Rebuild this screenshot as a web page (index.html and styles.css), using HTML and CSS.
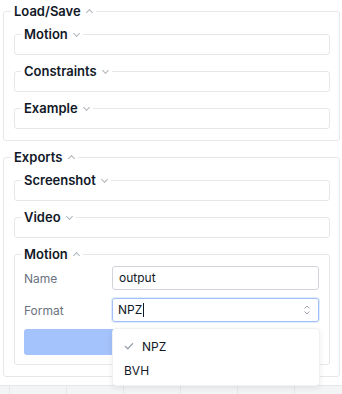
FILE: index.html
```html
<!DOCTYPE html>
<html>
<head>
    <title>Panel</title>
    <link rel="stylesheet" href="styles.css">
</head>
<body>
    <div class="panel">
        <fieldset class="group">
            <legend>Load/Save <span class="chev up"></span></legend>
            <fieldset class="sub"><legend>Motion <span class="chev"></span></legend></fieldset>
            <fieldset class="sub"><legend>Constraints <span class="chev"></span></legend></fieldset>
            <fieldset class="sub"><legend>Example <span class="chev"></span></legend></fieldset>
        </fieldset>
        <fieldset class="group">
            <legend>Exports <span class="chev up"></span></legend>
            <fieldset class="sub"><legend>Screenshot <span class="chev"></span></legend></fieldset>
            <fieldset class="sub"><legend>Video <span class="chev"></span></legend></fieldset>
            <fieldset class="sub open">
                <legend>Motion <span class="chev up"></span></legend>
                <div class="row">
                    <label>Name</label>
                    <div class="field">output</div>
                </div>
                <div class="row">
                    <label>Format</label>
                    <div class="field select">NPZ<span class="caret"></span>
                        <svg class="updown" width="8" height="10" viewBox="0 0 8 10">
                            <path d="M1.5 3.5 L4 1 L6.5 3.5 M1.5 6.5 L4 9 L6.5 6.5" fill="none" stroke="#9ca3af" stroke-width="1"/>
                        </svg>
                    </div>
                </div>
                <button class="export-btn" aria-label="Export"></button>
                <ul class="menu">
                    <li class="selected"><svg width="10" height="8" viewBox="0 0 10 8"><path d="M1 4 L3.8 6.8 L9 1.2" fill="none" stroke="#9ca3af" stroke-width="1.3"/></svg>NPZ</li>
                    <li>BVH</li>
                </ul>
            </fieldset>
        </fieldset>
    </div>
    <div class="strip">
        <div class="cell first"></div>
        <div class="cell"></div>
        <div class="cell"></div>
        <div class="cell"></div>
        <div class="cell"></div>
        <div class="cell"></div>
        <div class="cell"></div>
    </div>
</body>
</html>
```

FILE: styles.css
```css
body {
    margin: 0;
    font-family: Inter, 'Noto Sans', sans-serif;
    color: #111827;
    background: #fff;
}
.panel {
    padding: 3px 3px 0 3px;
    width: 337px;
}
fieldset {
    margin: 0;
    border: 1px solid #e5e7eb;
    border-radius: 3px;
    min-width: 0;
}
legend {
    font-size: 13px;
    font-weight: 600;
    line-height: 16px;
    padding: 0 4px 0 3px;
    margin-left: -3px;
}
.group {
    padding: 7px 9px 11px 10px;
    margin-bottom: 8px;
}
.sub {
    padding: 0 10px 12px 9px;
    margin-top: 8px;
}
.sub:first-of-type {
    margin-top: 0;
}
.chev {
    display: inline-block;
    width: 4px;
    height: 4px;
    border-right: 1px solid #b0b5bd;
    border-bottom: 1px solid #b0b5bd;
    transform: rotate(45deg);
    margin: 0 0 3px 3px;
    vertical-align: middle;
}
.chev.up {
    transform: rotate(-135deg);
    margin-bottom: 0;
}
.open {
    position: relative;
    padding-top: 4px;
    padding-bottom: 9px;
}
.row {
    display: flex;
    align-items: center;
    margin-bottom: 8px;
}
.row label {
    width: 88px;
    font-size: 12px;
    color: #6b7280;
}
.field {
    flex: 1;
    height: 22px;
    border: 1px solid #d1d5db;
    border-radius: 3px;
    font-size: 12px;
    line-height: 22px;
    padding: 0 6px;
    display: flex;
    align-items: center;
}
.select {
    border-color: #a3bff7;
    box-shadow: 0 0 0 1px #e0ebfd;
    padding-left: 5px;
}
.caret {
    display: inline-block;
    width: 1px;
    height: 14px;
    background: #111827;
    margin-left: 1px;
}
.updown {
    margin-left: auto;
    margin-right: 1px;
}
.export-btn {
    display: block;
    width: 100%;
    height: 26px;
    border: none;
    border-radius: 3px;
    background: #a4c2fb;
    margin-top: -1px;
}
.menu {
    position: absolute;
    left: 97px;
    top: 66px;
    width: 206px;
    margin: 0;
    padding: 5px 0 3px;
    list-style: none;
    background: #fff;
    border: 1px solid #f0f1f3;
    border-radius: 4px;
    box-shadow: 0 2px 6px rgba(0,0,0,0.08);
    z-index: 2;
}
.menu li {
    display: flex;
    align-items: center;
    height: 24px;
    padding-left: 11px;
    font-size: 12px;
}
.menu svg {
    margin-right: 8px;
}
.strip {
    display: flex;
    height: 8px;
    border-top: 1px solid #e5e7eb;
    background: #f3f4f6;
}
.cell {
    width: 56px;
    border-right: 1px solid #e5e7eb;
    flex-shrink: 0;
}
.cell.first {
    width: 9px;
}
```
